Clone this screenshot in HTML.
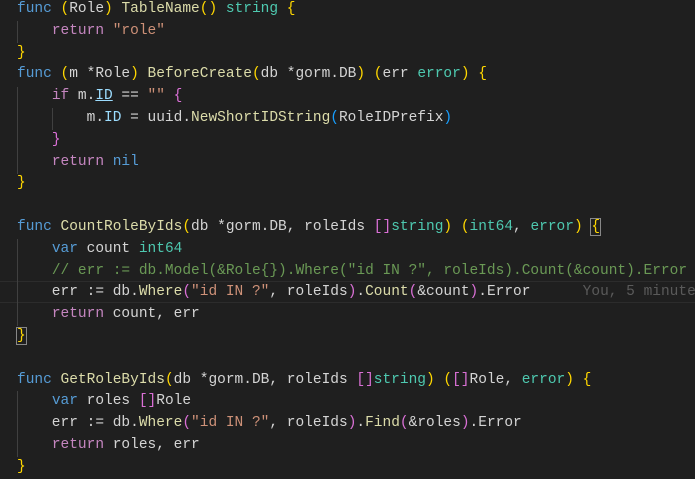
<html><head><style>
body{margin:0;background:#1f1f1f;width:695px;height:477px;overflow:hidden;position:relative}
pre{margin:0;position:absolute;top:-1px;left:17px;font-family:"Liberation Mono",monospace;font-size:14.5px;line-height:21.8px;color:#d4d4d4;white-space:pre;}
.k{color:#569cd6}.t{color:#4ec9b0}.f{color:#dcdcaa}.s{color:#ce9178}.c{color:#c586c0}.v{color:#9cdcfe}.m{color:#6a9955}
.y{color:#ffd700}.p{color:#da70d6}.b{color:#179fff}
.u{text-decoration:underline}
.g{position:absolute;width:1px;background:#404040}
.cur{position:absolute;left:0;width:695px;top:281px;height:20px;border-top:1px solid #2c2c2c;border-bottom:1px solid #2c2c2c}
.box{outline:1px solid #888;}
.bl{color:#5a5a5a}
</style></head><body>
<div class="cur"></div>
<div class="g" style="left:17px;top:21px;height:22px"></div>
<div class="g" style="left:17px;top:87px;height:87px"></div>
<div class="g" style="left:52px;top:108px;height:22px"></div>
<div class="g" style="left:17px;top:239px;height:87px"></div>
<div class="g" style="left:17px;top:391px;height:66px"></div>
<pre><span class="k">func</span> <span class="y">(</span>Role<span class="y">)</span> <span class="f">TableName</span><span class="y">()</span> <span class="t">string</span> <span class="y">{</span>
    <span class="c">return</span> <span class="s">"role"</span>
<span class="y">}</span>
<span class="k">func</span> <span class="y">(</span>m *Role<span class="y">)</span> <span class="f">BeforeCreate</span><span class="y">(</span>db *gorm.DB<span class="y">)</span> <span class="y">(</span>err <span class="t">error</span><span class="y">)</span> <span class="y">{</span>
    <span class="c">if</span> m.<span class="v u">ID</span> == <span class="s">""</span> <span class="p">{</span>
        m.<span class="v">ID</span> = uuid.<span class="f">NewShortIDString</span><span class="b">(</span>RoleIDPrefix<span class="b">)</span>
    <span class="p">}</span>
    <span class="c">return</span> <span class="k">nil</span>
<span class="y">}</span>

<span class="k">func</span> <span class="f">CountRoleByIds</span><span class="y">(</span>db *gorm.DB, roleIds <span class="p">[]</span><span class="t">string</span><span class="y">)</span> <span class="y">(</span><span class="t">int64</span>, <span class="t">error</span><span class="y">)</span> <span class="y box">{</span>
    <span class="k">var</span> count <span class="t">int64</span>
    <span class="m">// err := db.Model(&amp;Role{}).Where("id IN ?", roleIds).Count(&amp;count).Error</span>
    err := db.<span class="f">Where</span><span class="p">(</span><span class="s">"id IN ?"</span>, roleIds<span class="p">)</span>.<span class="f">Count</span><span class="p">(</span>&amp;count<span class="p">)</span>.Error      <span class="bl">You, 5 minutes ago</span>
    <span class="c">return</span> count, err
<span class="y box">}</span>

<span class="k">func</span> <span class="f">GetRoleByIds</span><span class="y">(</span>db *gorm.DB, roleIds <span class="p">[]</span><span class="t">string</span><span class="y">)</span> <span class="y">(</span><span class="p">[]</span>Role, <span class="t">error</span><span class="y">)</span> <span class="y">{</span>
    <span class="k">var</span> roles <span class="p">[]</span>Role
    err := db.<span class="f">Where</span><span class="p">(</span><span class="s">"id IN ?"</span>, roleIds<span class="p">)</span>.<span class="f">Find</span><span class="p">(</span>&amp;roles<span class="p">)</span>.Error
    <span class="c">return</span> roles, err
<span class="y">}</span></pre>
</body></html>
